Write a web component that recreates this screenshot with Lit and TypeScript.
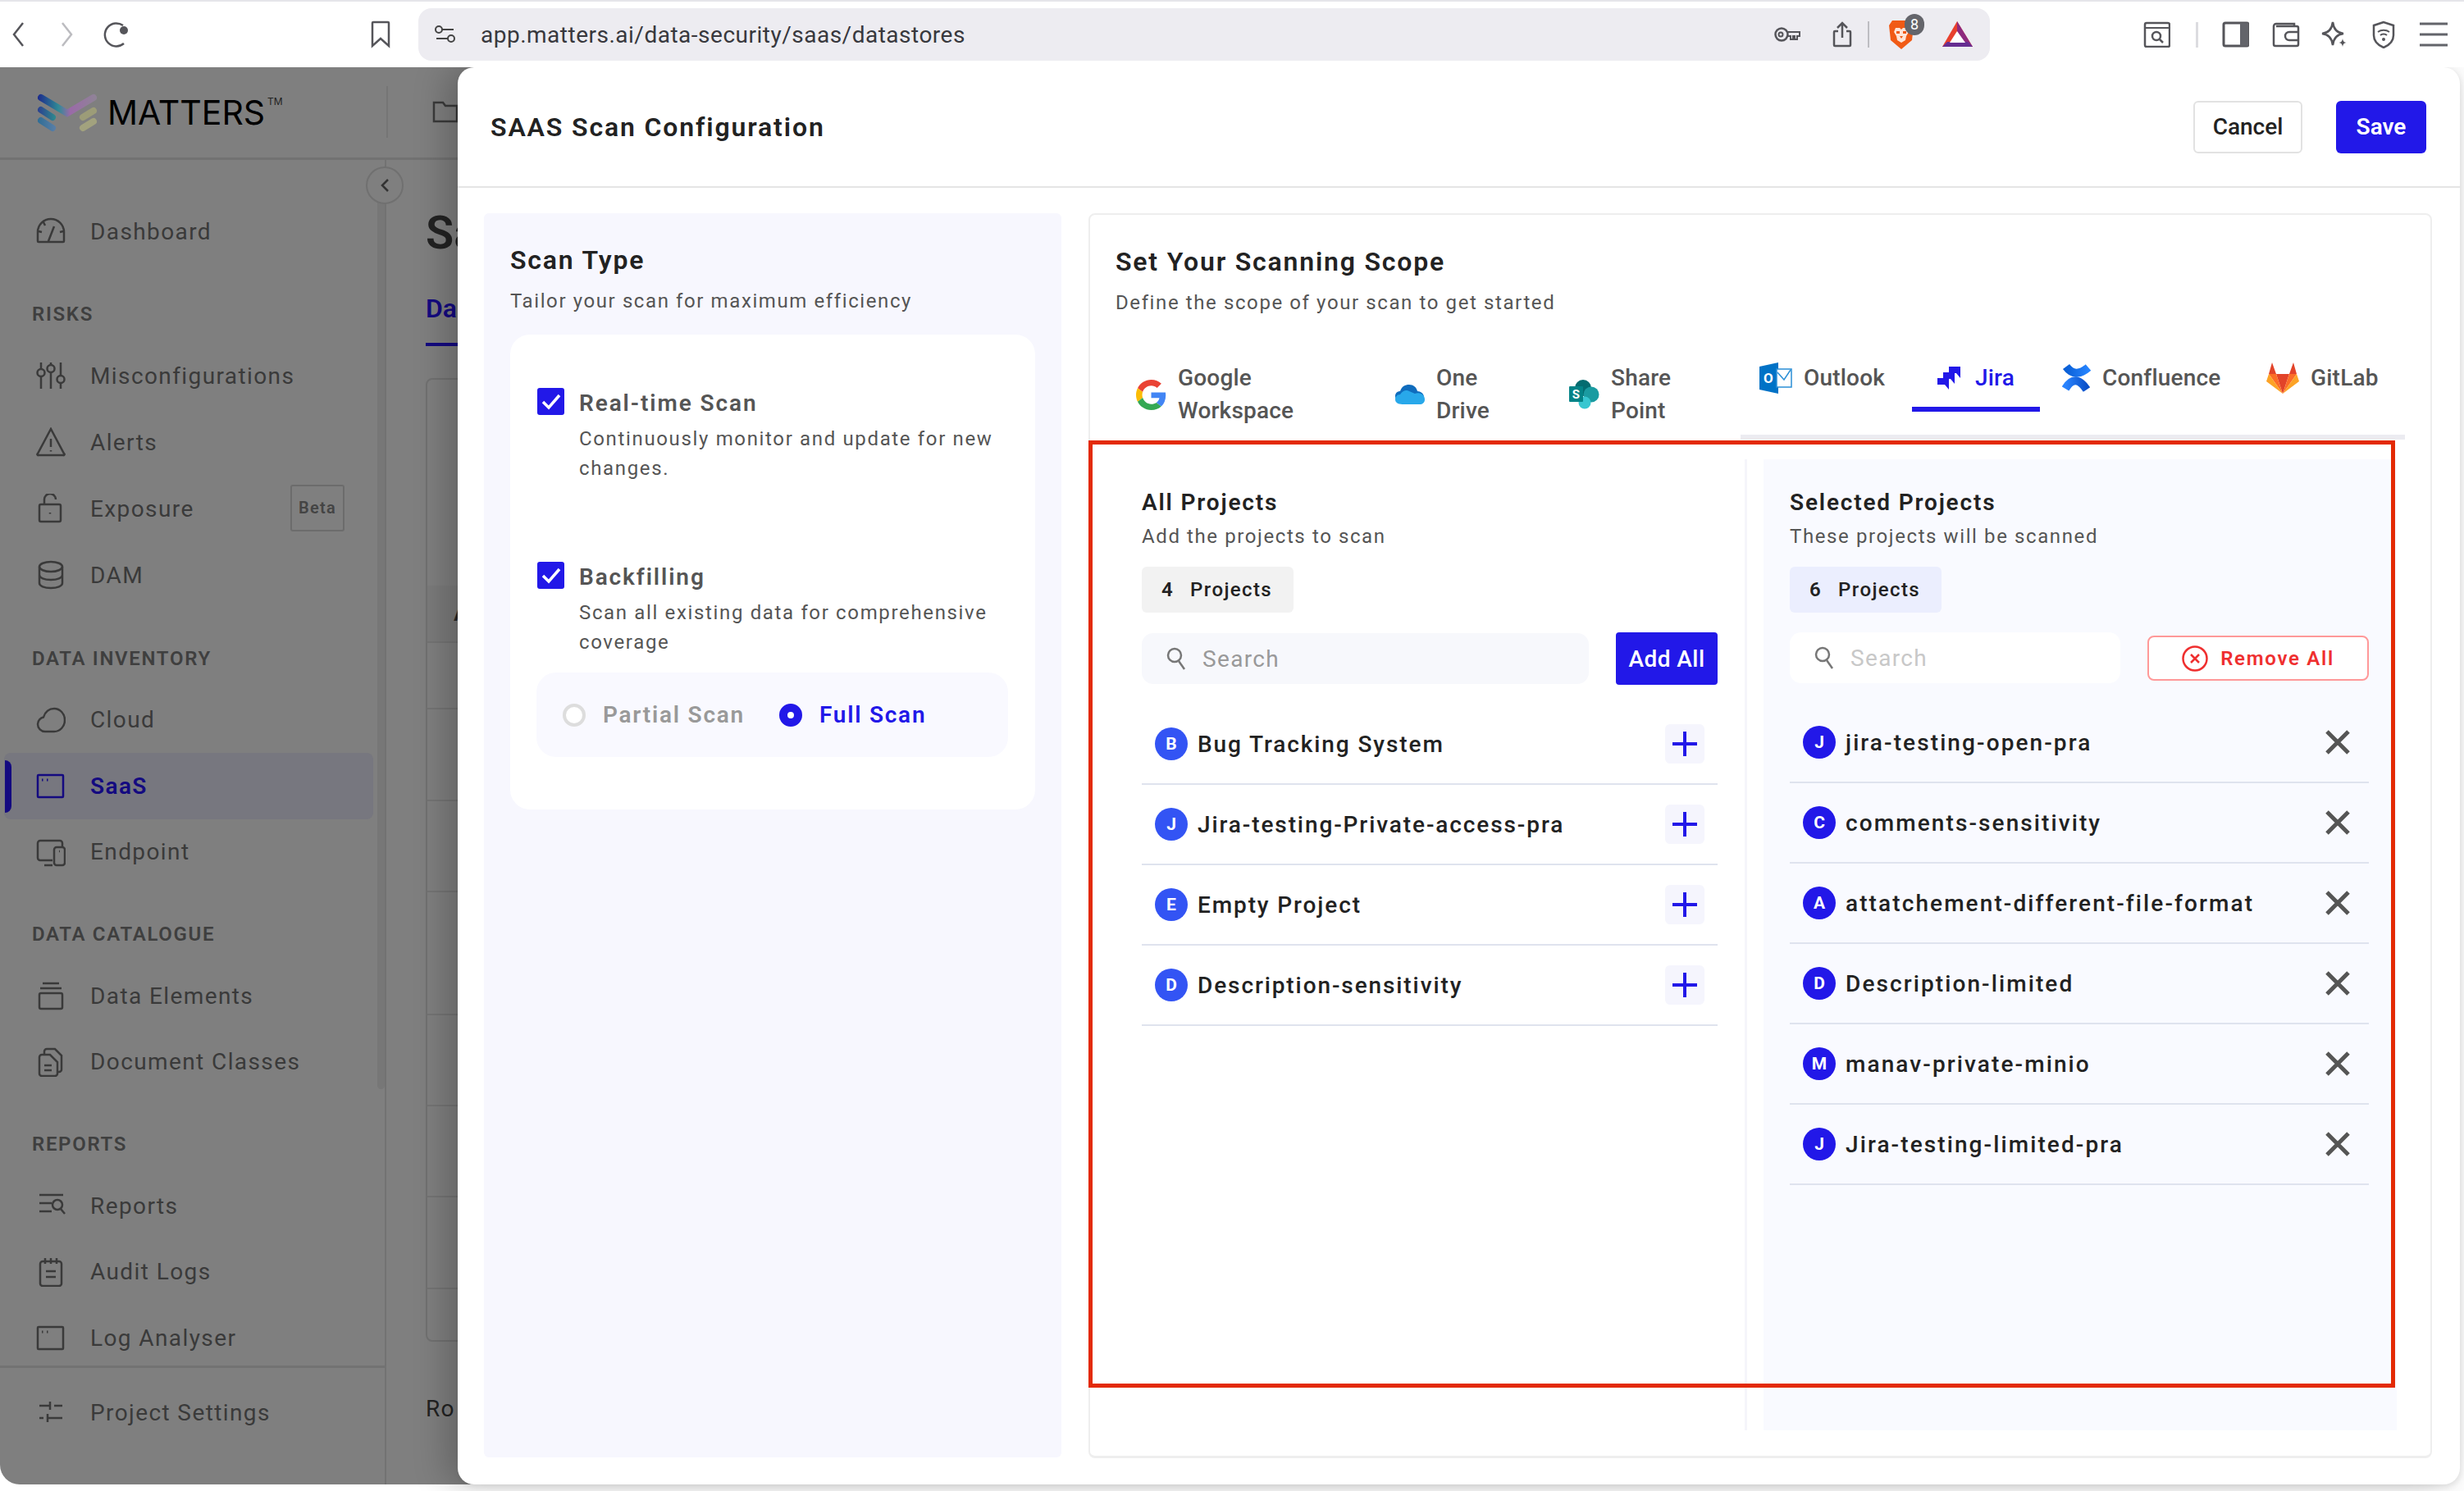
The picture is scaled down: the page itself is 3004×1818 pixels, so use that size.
import { LitElement, html, css, svg } from "lit";
import { customElement } from "lit/decorators.js";

const s = (w: number, h: number, body: unknown, cls = "") =>
  html`<svg class=${cls} width=${w} height=${h} viewBox="0 0 ${w} ${h}" fill="none">${body}</svg>`;

const IC = {
  dashboard: svg`<path d="M2 30v-11a16 16 0 0 1 32 0v11a1 1 0 0 1-1 1H3a1 1 0 0 1-1-1Z M15 30l7-18 M9 7l2 4 M3 18l4 1 M33 18l-4 1"/>`,
  misc: svg`<path d="M6 2v8 M6 19v15 M18 2v3 M18 14v20 M30 2v16 M30 27v7"/><circle cx="6" cy="14.5" r="4.5"/><circle cx="18" cy="9.5" r="4.5"/><circle cx="30" cy="22.5" r="4.5"/>`,
  alert: svg`<path d="M18 2 2 32a1 1 0 0 0 1 2h30a1 1 0 0 0 1-2Z M18 14v10 M18 28v1.5"/>`,
  lock: svg`<rect x="4" y="13" width="26" height="21" rx="2"/><path d="M10 13V7a7 7 0 0 1 14 0 M17 23v1.5"/>`,
  db: svg`<ellipse cx="18" cy="8" rx="14" ry="6"/><path d="M4 8v20c0 3.5 6 6 14 6s14-2.500 14-6V8 M4 18c0 3.500 6 6 14 6s14-2.500 14-6"/>`,
  cloud: svg`<path d="M11 32a9 9 0 0 1-9-9c0-5 4-8 7-8.500C11 8 16 4 22 4c7 0 13 6 13 14 0 8-6 14-13 14Z"/>`,
  win: svg`<rect x="2" y="5" width="31" height="27" rx="1"/><path d="M7 11h1.500 M13 11h1.500" stroke-width="3"/>`,
  endpoint: svg`<path d="M20 28H5a3 3 0 0 1-3-3V7a3 3 0 0 1 3-3h24a3 3 0 0 1 3 3v4 M10 34h10"/><rect x="22" y="12" width="13" height="22" rx="3"/><path d="M28 17h1"/>`,
  stack: svg`<path d="M8 3h20 M5 9h26"/><rect x="4" y="15" width="28" height="19" rx="2"/>`,
  docs: svg`<path d="M10 8V5a3 3 0 0 1 3-3h10l8 8v17a3 3 0 0 1-3 3h-2"/><path d="M4 12a3 3 0 0 1 3-3h10l9 9v14a3 3 0 0 1-3 3H7a3 3 0 0 1-3-3Z M10 22h9 M10 28h9"/>`,
  reports: svg`<path d="M4 5h29 M4 15h15 M4 25h15"/><circle cx="26" cy="17" r="6"/><path d="m30 22 5 6"/>`,
  audit: svg`<rect x="5" y="5" width="26" height="30" rx="3"/><path d="M11 1v7 M18 1v7 M25 1v7 M12 17h12 M12 24h12"/>`,
  sliders: svg`<path d="M4 10h12 M22 10h10 M17 5v10 M4 25h5 M15 25h17 M14 20v10"/>`,
};

const NAV: any[] = [
  { items: [["Dashboard", IC.dashboard]] },
  { label: "RISKS", cls: "g1", items: [["Misconfigurations", IC.misc], ["Alerts", IC.alert], ["Exposure", IC.lock, "beta"], ["DAM", IC.db]] },
  { label: "DATA INVENTORY", cls: "g2", items: [["Cloud", IC.cloud], ["SaaS", IC.win, "active"], ["Endpoint", IC.endpoint]] },
  { label: "DATA CATALOGUE", cls: "g3", items: [["Data Elements", IC.stack], ["Document Classes", IC.docs]] },
  { label: "REPORTS", cls: "g4", items: [["Reports", IC.reports], ["Audit Logs", IC.audit], ["Log Analyser", IC.win]] },
];

const gIcon = html`<svg width="37" height="37" viewBox="0 0 48 48"><path fill="#EA4335" d="M24 9.500c3.540 0 6.710 1.220 9.210 3.600l6.850-6.850C35.900 2.380 30.470 0 24 0 14.620 0 6.510 5.380 2.560 13.220l7.980 6.190C12.430 13.720 17.740 9.500 24 9.500z"/><path fill="#4285F4" d="M46.980 24.550c0-1.570-.15-3.090-.38-4.550H24v9.020h12.940c-.58 2.960-2.260 5.480-4.780 7.180l7.730 6c4.510-4.180 7.090-10.360 7.090-17.650z"/><path fill="#FBBC05" d="M10.530 28.590c-.48-1.450-.76-2.990-.76-4.590s.27-3.140.76-4.590l-7.980-6.190C.92 16.460 0 20.120 0 24c0 3.880.92 7.540 2.560 10.78l7.970-6.190z"/><path fill="#34A853" d="M24 48c6.480 0 11.930-2.130 15.890-5.810l-7.730-6c-2.150 1.450-4.920 2.300-8.160 2.300-6.260 0-11.570-4.220-13.470-9.910l-7.980 6.190C6.510 42.620 14.620 48 24 48z"/></svg>`;
const driveIcon = s(37, 37, svg`<path d="M6 26c-3 0-5-3-5-6 0-4 3-6 6-6 2-6 6-8 11-8s9 3 10 8c4 0 8 3 8 7" fill="#0f6cbd"/><path d="M12 30c-6 0-11-1-11-6 0-3 2-6 6-6 3-5 8-6 11-4l7 3c4-2 12 0 12 7 0 4-3 6-6 6Z" fill="#28a8ea"/>`);
const spIcon = s(37, 37, svg`<circle cx="17" cy="10" r="10" fill="#036c70"/><circle cx="27" cy="18" r="9.500" fill="#1a9ba1"/><circle cx="19" cy="28" r="7.500" fill="#37c6d0"/><rect x="0" y="8" width="17" height="19" rx="1" fill="#038387"/><text x="8.500" y="23" text-anchor="middle" font-size="15" font-weight="700" font-family="Roboto" fill="#fff">S</text>`);
const olIcon = s(40, 38, svg`<path d="M0 5 23 0v38L0 33Z" fill="#0072c6"/><rect x="21" y="8" width="18" height="22" fill="#fff" stroke="#2b8fd6" stroke-width="1.500"/><path d="m22 12 8 9 8-12" stroke="#2b8fd6" stroke-width="1.500"/><text x="11" y="25" text-anchor="middle" font-size="17" font-weight="700" font-family="Roboto" fill="#fff">O</text>`);
const jiraIcon = s(29, 28, svg`<path d="M15 0h14v14l-5-6h-9Z M8 7h14v14l-5-6H8Z M1 14h14v14l-5-6H1Z" fill="#2218e8"/>`);
const cfIcon = html`<svg width="35" height="34" viewBox="0 0 35 34" fill="none"><defs><linearGradient id="cf1" x1="0" y1="0" x2="1" y2="0"><stop offset="0" stop-color="#0a5fd6"/><stop offset="1" stop-color="#2684ff"/></linearGradient><linearGradient id="cf2" x1="0" y1="0" x2="1" y2="0"><stop offset="0" stop-color="#2a84ff"/><stop offset="1" stop-color="#0a50c8"/></linearGradient></defs><path d="M5 3q11 15 27 1" stroke="url(#cf1)" stroke-width="10"/><path d="M4 30q12-20 26 1" stroke="url(#cf2)" stroke-width="10"/></svg>`;
const glIcon = s(40, 38, svg`<path d="M3 14 7 0l5 14Z M28 14l5-14 4 14Z" fill="#e24329"/><path d="M12 14h16l-8 24Z" fill="#e24329"/><path d="M3 14h9l8 24Z M28 14h9L20 38Z" fill="#fc6d26"/><path d="m3 14-3 9 20 15Z M37 14l3 9-20 15Z" fill="#fca326"/>`);

const TABS: any[] = [
  { t: html`Google<br />Workspace`, i: gIcon, w: 315 },
  { t: html`One<br />Drive`, i: driveIcon, w: 213 },
  { t: html`Share<br />Point`, i: spIcon, w: 232 },
  { t: "Outlook", i: olIcon, w: 186, one: true },
  { t: "Jira", i: jiraIcon, w: 156, one: true, active: true },
  { t: "Confluence", i: cfIcon, w: 249, one: true },
  { t: "GitLab", i: glIcon, w: 140, one: true },
];

const LEFT = ["Bug Tracking System", "Jira-testing-Private-access-pra", "Empty Project", "Description-sensitivity"];
const RIGHT = ["jira-testing-open-pra", "comments-sensitivity", "attatchement-different-file-format", "Description-limited", "manav-private-minio", "Jira-testing-limited-pra"];
const TABLE_ROWS = [81, 112, 111, 150, 111, 111, 112];

const searchIcon = s(24, 30, svg`<circle cx="10" cy="11" r="8" stroke="#777" stroke-width="2.500"/><path d="m15 18 7 10" stroke="#777" stroke-width="2.500"/>`);

@customElement("app-root")
export class AppRoot extends LitElement {
  static styles = css`
    :host { display: block; width: 3004px; height: 1818px; position: relative; overflow: hidden; background: #fff; font-family: Roboto, "Noto Sans", sans-serif; color: #222; }
    svg { display: block; flex: none; }

    .toolbar { height: 82px; box-sizing: border-box; border-top: 2px solid #e5e5ea; display: flex; align-items: center; padding-left: 14px; }
    .m-fwd { margin-left: 44px; } .m-rel { margin-left: 35px; } .m-bm { margin-left: 294px; }
    .url { margin-left: 34px; width: 1916px; height: 64px; background: #edecf1; border-radius: 16px; display: flex; align-items: center; padding-left: 20px; box-sizing: border-box; }
    .url-text { margin-left: 31px; font-size: 28px; letter-spacing: .5px; color: #38383d; flex: 1; white-space: nowrap; }
    .u-key { margin-right: 39px; } .u-share { margin-right: 19px; } .u-sep { width: 2px; height: 32px; background: #bdbdc2; margin-right: 23px; }
    .brave { position: relative; width: 32px; height: 36px; margin-right: 34px; }
    .badge { position: absolute; left: 20px; top: -7px; width: 24px; height: 26px; border-radius: 12px; background: #64656b; color: #fff; font-size: 18px; line-height: 26px; text-align: center; }
    .u-bat { margin-right: 21px; }
    .m-read { margin-left: 187px; } .t-sep { width: 3px; height: 31px; background: #dcdce0; margin-left: 31px; }
    .m-side { margin-left: 29px; } .m-wal { margin-left: 28px; } .m-spk { margin-left: 25px; } .m-shd { margin-left: 28px; } .m-men { margin-left: 29px; }

    .shell { width: 2700px; height: 1728px; background: #7f7f7f; border-bottom-left-radius: 24px; display: flex; flex-direction: column; overflow: hidden; }
    .apphdr { height: 110px; flex: none; border-bottom: 3px solid #727272; box-sizing: content-box; display: flex; align-items: center; }
    .logo { margin-left: 46px; }
    .brand { margin-left: 13px; font-family: Inter, Roboto, sans-serif; font-size: 41px; color: #000; line-height: 48px; white-space: nowrap; }
    .brand sup { font-size: 12px; vertical-align: 24px; line-height: 0; color: #222; margin-left: 3px; }
    .hdiv { position: absolute; left: 471px; top: 105px; width: 2px; height: 63px; background: #757575; }
    .folder { position: absolute; left: 527px; top: 122px; }
    .body { flex: 1; display: flex; min-height: 0; }
    .side { width: 469px; flex: none; border-right: 2px solid #727272; display: flex; flex-direction: column; position: relative; }
    .scroll { position: absolute; right: 0; top: 48px; width: 9px; height: 1085px; background: #777; border-radius: 5px; }
    .toggle { position: absolute; left: 446px; top: 203px; width: 42px; height: 42px; border-radius: 50%; background: #7f7f7f; border: 2px solid #707070; display: flex; align-items: center; justify-content: center; }
    .nav { flex: 1; min-height: 0; overflow: hidden; padding-top: 47px; }
    .label { height: 40px; line-height: 40px; padding-left: 39px; font-size: 24px; font-weight: 600; letter-spacing: 1.67px; color: #3f3f3f; margin-bottom: 15px; }
    .g1 { margin-top: 40px; } .g2 { margin-top: 41px; } .g3 { margin-top: 40px; } .g4 { margin-top: 40px; }
    .g1 .item { height: 81px; }
    .item { height: 80.5px; margin-left: 5px; width: 450px; display: flex; align-items: center; padding-left: 39px; gap: 30px; box-sizing: border-box; font-size: 28px; letter-spacing: 1.4px; color: #3a3a3a; position: relative; border-radius: 8px; }
    .item svg { stroke: #3a3a3a; stroke-width: 2.500; }
    .item.active { background: #77777f; color: #140a80; font-weight: 600; }
    .item.active svg { stroke: #140a80; }
    .ind { position: absolute; left: 1px; top: 9px; width: 8px; height: 64px; background: #140a80; border-radius: 0 8px 8px 0; }
    .beta { position: absolute; left: 349px; top: 11px; width: 66px; height: 57px; box-sizing: border-box; border: 2px solid #6c6c6c; border-radius: 3px; font-size: 20px; font-weight: 600; letter-spacing: 1.27px; color: #444; display: flex; align-items: center; justify-content: center; }
    .foot { height: 145px; flex: none; border-top: 3px solid #727272; box-sizing: border-box; padding-top: 14px; }
    .main { width: 87px; flex: none; padding-left: 48px; min-width: 0; overflow: hidden; box-sizing: content-box; }
    .main > * { width: 300px; }
    .bigt { margin-top: 59px; height: 60px; line-height: 60px; font-size: 56px; font-weight: 600; color: #222; }
    .dtab { margin-top: 42px; height: 62px; line-height: 40px; border-bottom: 4px solid #140a80; color: #140a80; font-size: 32px; font-weight: 600; }
    .tbl { margin-top: 39px; height: 1175px; border: 2px solid #717171; border-radius: 8px; box-sizing: border-box; overflow: hidden; }
    .tspace { height: 251px; }
    .thead { height: 70px; background: #7b7b7b; border-bottom: 2px solid #747474; box-sizing: border-box; padding-left: 32px; line-height: 68px; font-size: 28px; font-weight: 600; color: #2a2a2a; }
    .trow { border-bottom: 2px solid #747474; box-sizing: border-box; }
    .rowslabel { margin-top: 62px; font-size: 28px; line-height: 40px; letter-spacing: 1.36px; color: #222; }

    .modal { position: absolute; left: 558px; top: 82px; width: 2441px; height: 1728px; background: #fff; border-radius: 20px; box-shadow: -14px 0 40px rgba(0,0,0,.22), 2px 3px 6px rgba(0,0,0,.08); clip-path: inset(0 -60px -20px -60px); display: flex; flex-direction: column; }
    .mhead { height: 145px; flex: none; border-bottom: 2px solid #e5e5e5; display: flex; align-items: center; padding: 0 41px 0 40px; }
    .mtitle { flex: 1; font-size: 32px; font-weight: 600; letter-spacing: 1.86px; color: #222; }
    .btn { height: 64px; display: flex; align-items: center; justify-content: center; box-sizing: border-box; font-size: 28px; }
    .cancel { width: 133px; border: 2px solid #e2e2e2; border-radius: 6px; color: #222; font-weight: 500; background: #fff; }
    .save { width: 110px; margin-left: 41px; background: #2218e8; border-radius: 6px; color: #fff; font-weight: 600; }
    .mbody { display: flex; gap: 33px; padding: 31px 0 0 32px; }
    .pleft { width: 704px; height: 1517px; box-sizing: border-box; background: #f7f7fe; border-radius: 6px; padding: 37px 32px 0; }
    .h2 { font-size: 32px; font-weight: 600; letter-spacing: 1.8px; line-height: 40px; color: #222; }
    .sub { font-size: 24px; letter-spacing: 1.6px; line-height: 36px; color: #555; margin-top: 12px; }
    .card { margin-top: 23px; background: #fff; border-radius: 24px; padding: 64px 33px; }
    .opt { display: flex; gap: 18px; }
    .opt + .opt { margin-top: 95px; }
    .chk { width: 33px; height: 33px; border-radius: 3px; background: #2218e8; margin-top: 1px; flex: none; display: flex; align-items: center; justify-content: center; }
    .opt-t { font-size: 28px; font-weight: 600; letter-spacing: 1.9px; line-height: 40px; color: #555; }
    .opt-d { font-size: 24px; letter-spacing: 1.65px; line-height: 36px; color: #555; margin-top: 5px; }
    .radios { margin-top: 19px; margin-left: -1px; height: 103px; width: 575px; border-radius: 24px; background: #f9f9ff; display: flex; align-items: center; padding-left: 32px; box-sizing: border-box; font-size: 28px; font-weight: 600; letter-spacing: 1.75px; }
    .r-off { width: 28px; height: 28px; box-sizing: border-box; border-radius: 50%; border: 4px solid #ddd; background: #fff; margin-right: 21px; }
    .r-on { width: 28px; height: 28px; box-sizing: border-box; border-radius: 50%; border: 10px solid #2218e8; background: #fff; margin: 0 21px 0 42px; }
    .partial { color: #999; } .full { color: #2218e8; }

    .pright { width: 1638px; height: 1518px; box-sizing: border-box; border: 2px solid #eee; border-bottom-width: 3px; border-radius: 8px; padding-top: 37px; }
    .phead { padding-left: 31px; }
    .tabs { margin-top: 54px; margin-left: 56px; height: 89px; display: flex; align-items: flex-start; }
    .tab { display: flex; align-items: center; gap: 14px; font-size: 28px; font-weight: 500; letter-spacing: .2px; line-height: 40px; color: #555; flex: none; box-sizing: border-box; height: 80px; }
    .tab.one { height: 40px; }
    .tab.active { height: 61px; padding: 0 0 15px 30px; border-bottom: 6px solid #2218e8; color: #2218e8; gap: 18px; margin-right: 27px; }
    .tdiv { margin-left: 793px; width: 810px; height: 6px; background: #ececf1; }
    .cols { margin-top: 24px; display: flex; height: 1184px; }
    .cl { width: 798px; flex: none; box-sizing: border-box; padding: 33px 33px 0 63px; }
    .cdiv { width: 3px; flex: none; background: #f5f5fa; }
    .cr { width: 772px; margin-left: 20px; flex: none; box-sizing: border-box; background: #f9faff; padding: 33px 34px 0 32px; }
    .h3 { font-size: 28px; font-weight: 600; letter-spacing: 1.82px; line-height: 40px; color: #222; }
    .h3s { font-size: 24px; letter-spacing: 1.6px; line-height: 36px; color: #555; margin-top: 3px; }
    .chip { margin-top: 19px; height: 56px; display: inline-flex; align-items: center; box-sizing: border-box; padding: 0 26px 0 24px; gap: 20px; border-radius: 6px; font-size: 24px; font-weight: 500; letter-spacing: 1.39px; color: #222; vertical-align: top; }
    .chip b { font-weight: 600; }
    .chip.gray { background: #f2f2f2; } .chip.blue { background: #ebeefe; }
    .ctrls { margin-top: 24px; height: 64px; display: flex; align-items: center; }
    .search { height: 62px; border-radius: 14px; display: flex; align-items: center; padding-left: 30px; gap: 20px; box-sizing: border-box; font-size: 28px; letter-spacing: 1.33px; }
    .sl { width: 545px; background: #f7f8fc; color: #999; }
    .sr { width: 403px; background: #fff; color: #c8c8c8; margin-top: -2px; }
    .addall { margin-left: 33px; width: 124px; height: 64px; background: #2218e8; border-radius: 4px; color: #fff; font-size: 28px; font-weight: 500; letter-spacing: .44px; display: flex; align-items: center; justify-content: center; }
    .remove { margin-left: 33px; width: 270px; height: 55px; box-sizing: border-box; border: 2px solid #f99; border-radius: 8px; background: #fff; color: #ef2f2f; font-size: 24px; font-weight: 600; letter-spacing: 1.7px; display: flex; align-items: center; justify-content: center; gap: 15px; margin-top: -1px; }
    .list { margin-top: 24px; }
    .cr .list { margin-top: 22px; }
    .row { height: 98px; box-sizing: border-box; border-bottom: 2px solid #dfe3ee; display: flex; align-items: center; padding-left: 16px; gap: 12px; font-size: 28px; font-weight: 500; letter-spacing: 1.9px; color: #222; }
    .cr .row { letter-spacing: 2.1px; }
    .name { flex: 1; white-space: nowrap; }
    .av { width: 40px; height: 40px; border-radius: 50%; display: flex; align-items: center; justify-content: center; color: #fff; font-size: 21px; font-weight: 700; letter-spacing: 0; flex: none; }
    .cl .av { background: #3354f4; } .cr .av { background: #2218e8; }
    .plus { width: 48px; height: 48px; border-radius: 6px; background: #f5f5fd; margin-right: 16px; display: flex; align-items: center; justify-content: center; }
    .x { margin-right: 23px; }

    .redbox { position: absolute; left: 1327px; top: 537px; width: 1593px; height: 1155px; box-sizing: border-box; border: 5px solid #e32a05; pointer-events: none; }
  `;

  private toolbar() {
    return html`<div class="toolbar">
      ${s(16, 32, svg`<path d="M14 2 3 16l11 14" stroke="#55555a" stroke-width="2.500"/>`)}
      ${s(16, 32, svg`<path d="m2 2 11 14L2 30" stroke="#bcbcc0" stroke-width="2.500"/>`, "m-fwd")}
      ${s(33, 32, svg`<path d="M25 5a14 14 0 1 0 1 22" stroke="#55555a" stroke-width="2.500"/><circle cx="26" cy="11" r="5" fill="#55555a"/>`, "m-rel")}
      ${s(24, 34, svg`<path d="M2 3a1 1 0 0 1 1-1h18a1 1 0 0 1 1 1v28l-10-9-10 9Z" stroke="#55555a" stroke-width="2.500"/>`, "m-bm")}
      <div class="url">
        ${s(25, 22, svg`<circle cx="5" cy="5" r="4" stroke="#444" stroke-width="2"/><path d="M9 5h14 M2 16h14" stroke="#444" stroke-width="2"/><circle cx="20" cy="16" r="4" stroke="#444" stroke-width="2"/>`)}
        <span class="url-text">app.matters.ai/data-security/saas/datastores</span>
        ${s(32, 18, svg`<circle cx="9" cy="9" r="7.500" stroke="#55555a" stroke-width="2.500"/><circle cx="8" cy="9" r="2.500" stroke="#55555a" stroke-width="2"/><path d="M16 6h15v5h-3v4h-3v-4h-2v4h-3v-4h-4" stroke="#55555a" stroke-width="2"/>`, "u-key")}
        ${s(24, 32, svg`<path d="M7 12H3a1 1 0 0 0-1 1v16a1 1 0 0 0 1 1h18a1 1 0 0 0 1-1V13a1 1 0 0 0-1-1h-4 M12 20V2 M6 8l6-6 6 6" stroke="#55555a" stroke-width="2.500"/>`, "u-share")}
        <div class="u-sep"></div>
        <div class="brave">
          ${s(32, 36, svg`<path d="M5 1h22l4 6-2 18-13 11L3 25 1 7Z" fill="#f15a15"/><path d="M9 10h5l2 2 2-2h5l2 5-3 5-1 5-5 3-5-3-1-5-3-5Z" fill="#ffe5d8"/><path d="M10 14h4v3h-4Z M18 14h4v3h-4Z M14 20h4l-2 3Z" fill="#f15a15"/>`)}
          <div class="badge">8</div>
        </div>
        <svg class="u-bat" width="37" height="32" viewBox="0 0 37 32"><path d="M18 0 0 31h37Z" fill="#e8402d"/><path d="M18 0 37 31l-8 0L18 12Z" fill="#8d2a7f"/><path d="M0 31l6-6h25l6 6Z" fill="#662d91"/><path d="M18 12 28 26H9Z" fill="#fff"/></svg>
      </div>
      ${s(33, 32, svg`<rect x="2" y="2" width="30" height="29" rx="2" stroke="#55555a" stroke-width="2.500"/><path d="M2 8h30" stroke="#55555a" stroke-width="2"/><circle cx="16" cy="18" r="5" stroke="#55555a" stroke-width="2.500"/><path d="m20 22 4 4" stroke="#55555a" stroke-width="2.500"/>`, "m-read")}
      <div class="t-sep"></div>
      ${s(33, 32, svg`<rect x="2" y="2" width="30" height="28" rx="2" stroke="#55555a" stroke-width="3"/><rect x="22" y="2" width="10" height="28" fill="#63646a"/>`, "m-side")}
      ${s(34, 32, svg`<path d="M27 6V3H5a3 3 0 0 0-3 3v22a2 2 0 0 0 2 2h26a2 2 0 0 0 2-2V8a2 2 0 0 0-2-2H5 M32 13H21a4 4 0 0 0 0 10h11" stroke="#55555a" stroke-width="2.500"/>`, "m-wal")}
      ${s(34, 34, svg`<path d="M15 2c1 9 5 13 13 14-8 1-12 5-13 14-1-9-5-13-13-14 8-1 12-5 13-14Z" stroke="#55555a" stroke-width="2.500"/><path d="M27 22c.4 3 1.600 4.600 4.500 5-3 .4-4 2-4.500 5-.4-3-1.600-4.600-4.500-5 3-.4 4-2 4.500-5Z" fill="#55555a"/>`, "m-spk")}
      ${s(30, 34, svg`<path d="M15 2 3 6v12c0 7 5 12 12 15 7-3 12-8 12-15V6Z" stroke="#55555a" stroke-width="2.500"/><path d="M8 14c4-3 10-3 14 0 M11 18c2-2 6-2 8 0" stroke="#55555a" stroke-width="2"/><circle cx="15" cy="23" r="2" fill="#55555a"/>`, "m-shd")}
      ${s(34, 30, svg`<path d="M0 2h34 M0 15h34 M0 28h34" stroke="#63646a" stroke-width="3"/>`, "m-men")}
    </div>`;
  }

  private navItem(it: any[]) {
    const active = it[2] === "active";
    return html`<div class="item ${active ? "active" : ""}">
      ${active ? html`<div class="ind"></div>` : ""}
      ${s(36, 36, it[1])}
      <span>${it[0]}</span>
      ${it[2] === "beta" ? html`<span class="beta">Beta</span>` : ""}
    </div>`;
  }

  private logo() {
    return html`<svg class="logo" width="72" height="47" viewBox="0 0 72 47" fill="none" stroke-width="8" stroke-linecap="round" stroke-linejoin="miter">
      <defs>
        <linearGradient id="lv" gradientUnits="userSpaceOnUse" x1="0" y1="0" x2="72" y2="0"><stop offset="0" stop-color="#1c2a8c"/><stop offset=".35" stop-color="#2f8a96"/><stop offset=".55" stop-color="#9a6aa8"/><stop offset="1" stop-color="#8f8496"/></linearGradient>
        <linearGradient id="l2" gradientUnits="userSpaceOnUse" x1="0" y1="0" x2="22" y2="0"><stop offset="0" stop-color="#2a4090"/><stop offset="1" stop-color="#2f8a8e"/></linearGradient>
        <linearGradient id="l3" gradientUnits="userSpaceOnUse" x1="0" y1="0" x2="22" y2="0"><stop offset="0" stop-color="#2f6d95"/><stop offset="1" stop-color="#5a7fa8"/></linearGradient>
      </defs>
      <path d="M4 5 36 24 68 5" stroke="url(#lv)"/>
      <path d="M4 20 18 29" stroke="url(#l2)"/>
      <path d="M4 33 18 42" stroke="url(#l3)"/>
      <path d="M55 29 68 21" stroke="#9c9c78"/>
      <path d="M55 42 68 34" stroke="#a2a27e"/>
    </svg>`;
  }

  render() {
    return html`
      ${this.toolbar()}
      <div class="shell">
        <div class="apphdr">
          ${this.logo()}
          <span class="brand">MATTERS<sup>TM</sup></span>
        </div>
        <div class="body">
          <aside class="side">
            <div class="scroll"></div>
            <div class="nav">
              ${NAV.map((g) => html`<div class=${g.cls || ""}>
                ${g.label ? html`<div class="label">${g.label}</div>` : ""}
                ${g.items.map((i: any[]) => this.navItem(i))}
              </div>`)}
            </div>
            <div class="foot">${this.navItem(["Project Settings", IC.sliders])}</div>
          </aside>
          <div class="main">
            <div class="bigt">Sa</div>
            <div class="dtab">Da</div>
            <div class="tbl">
              <div class="tspace"></div>
              <div class="thead">A</div>
              ${TABLE_ROWS.map((h) => html`<div class="trow" style="height:${h}px"></div>`)}
            </div>
            <div class="rowslabel">Ro</div>
          </div>
        </div>
      </div>
      <div class="hdiv"></div>
      <svg class="folder" width="31" height="28" viewBox="0 0 31 28" fill="none"><path d="M2 26V3h11l3 4h14v19Z" stroke="#3a3a3a" stroke-width="2.500"/></svg>
      <div class="toggle">${s(12, 18, svg`<path d="M10 2 3 9l7 7" stroke="#333" stroke-width="2.500"/>`)}</div>

      <section class="modal">
        <header class="mhead">
          <div class="mtitle">SAAS Scan Configuration</div>
          <div class="btn cancel">Cancel</div>
          <div class="btn save">Save</div>
        </header>
        <div class="mbody">
          <div class="pleft">
            <div class="h2">Scan Type</div>
            <div class="sub">Tailor your scan for maximum efficiency</div>
            <div class="card">
              ${this.opt("Real-time Scan", html`Continuously monitor and update for new<br />changes.`)}
              ${this.opt("Backfilling", html`Scan all existing data for comprehensive<br />coverage`)}
              <div class="radios">
                <div class="r-off"></div><span class="partial">Partial Scan</span>
                <div class="r-on"></div><span class="full">Full Scan</span>
              </div>
            </div>
          </div>
          <div class="pright">
            <div class="phead">
              <div class="h2">Set Your Scanning Scope</div>
              <div class="sub">Define the scope of your scan to get started</div>
            </div>
            <div class="tabs">
              ${TABS.map((t) => html`<div class="tab ${t.one ? "one" : ""} ${t.active ? "active" : ""}" style="width:${t.w}px">${t.i}<span>${t.t}</span></div>`)}
            </div>
            <div class="tdiv"></div>
            <div class="cols">
              <div class="cl">
                <div class="h3">All Projects</div>
                <div class="h3s">Add the projects to scan</div>
                <div class="chip gray"><b>4</b><span>Projects</span></div>
                <div class="ctrls">
                  <div class="search sl">${searchIcon}<span>Search</span></div>
                  <div class="addall">Add All</div>
                </div>
                <div class="list">
                  ${LEFT.map((n) => html`<div class="row"><div class="av">${n[0].toUpperCase()}</div><div class="name">${n}</div>
                    <div class="plus">${s(32, 32, svg`<path d="M16 1v30 M1 16h30" stroke="#2218e8" stroke-width="4"/>`)}</div></div>`)}
                </div>
              </div>
              <div class="cdiv"></div>
              <div class="cr">
                <div class="h3">Selected Projects</div>
                <div class="h3s">These projects will be scanned</div>
                <div class="chip blue"><b>6</b><span>Projects</span></div>
                <div class="ctrls">
                  <div class="search sr">${searchIcon}<span>Search</span></div>
                  <div class="remove">
                    ${s(32, 32, svg`<circle cx="16" cy="16" r="14.500" stroke="#ef2f2f" stroke-width="2.500"/><path d="m11 11 10 10 M21 11 11 21" stroke="#ef2f2f" stroke-width="2.500"/>`)}
                    <span>Remove All</span>
                  </div>
                </div>
                <div class="list">
                  ${RIGHT.map((n) => html`<div class="row"><div class="av">${n[0].toUpperCase()}</div><div class="name">${n}</div>
                    <div class="x">${s(30, 30, svg`<path d="m2 2 26 26 M28 2 2 28" stroke="#555" stroke-width="5"/>`)}</div></div>`)}
                </div>
              </div>
            </div>
          </div>
        </div>
      </section>
      <div class="redbox"></div>
    `;
  }

  private opt(t: string, d: unknown) {
    return html`<div class="opt">
      <div class="chk">${s(24, 20, svg`<path d="m2 10 7 7L22 2" stroke="#fff" stroke-width="3.500"/>`)}</div>
      <div><div class="opt-t">${t}</div><div class="opt-d">${d}</div></div>
    </div>`;
  }
}
